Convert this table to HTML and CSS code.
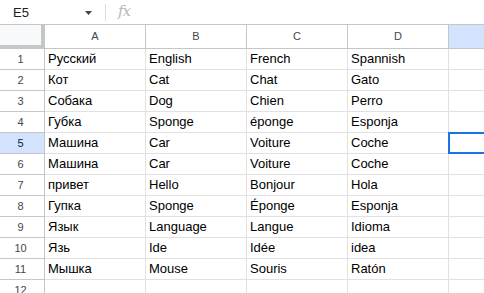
FILE: index.html
```html
<!DOCTYPE html>
<html>
<head>
<meta charset="utf-8">
<link rel="stylesheet" href="styles.css">
</head>
<body>
<div class="toolbar">
  <div class="namebox">E5</div>
  <svg class="caret" width="7" height="4" viewBox="0 0 7 4"><path d="M0 0H7L3.5 4Z" fill="#444"/></svg>
  <div class="sep"></div>
  <div class="fx">fx</div>
</div>
<div class="grid">
  <div class="corner"></div>
  <div class="ch">A</div><div class="ch">B</div><div class="ch">C</div><div class="ch">D</div><div class="ch act"></div>

  <div class="rh">1</div><div class="c">Русский</div><div class="c">English</div><div class="c">French</div><div class="c">Spannish</div><div class="c"></div>
  <div class="rh">2</div><div class="c">Кот</div><div class="c">Cat</div><div class="c">Chat</div><div class="c">Gato</div><div class="c"></div>
  <div class="rh">3</div><div class="c">Собака</div><div class="c">Dog</div><div class="c">Chien</div><div class="c">Perro</div><div class="c"></div>
  <div class="rh">4</div><div class="c">Губка</div><div class="c">Sponge</div><div class="c">éponge</div><div class="c">Esponja</div><div class="c"></div>
  <div class="rh act">5</div><div class="c">Машина</div><div class="c">Car</div><div class="c">Voiture</div><div class="c">Coche</div><div class="c sel"></div>
  <div class="rh">6</div><div class="c">Машина</div><div class="c">Car</div><div class="c">Voiture</div><div class="c">Coche</div><div class="c"></div>
  <div class="rh">7</div><div class="c">привет</div><div class="c">Hello</div><div class="c">Bonjour</div><div class="c">Hola</div><div class="c"></div>
  <div class="rh">8</div><div class="c">Гупка</div><div class="c">Sponge</div><div class="c">Éponge</div><div class="c">Esponja</div><div class="c"></div>
  <div class="rh">9</div><div class="c">Язык</div><div class="c">Language</div><div class="c">Langue</div><div class="c">Idioma</div><div class="c"></div>
  <div class="rh">10</div><div class="c">Язь</div><div class="c">Ide</div><div class="c">Idée</div><div class="c">idea</div><div class="c"></div>
  <div class="rh">11</div><div class="c">Мышка</div><div class="c">Mouse</div><div class="c">Souris</div><div class="c">Ratón</div><div class="c"></div>
  <div class="rh">12</div><div class="c"></div><div class="c"></div><div class="c"></div><div class="c"></div><div class="c"></div>
</div>
</body>
</html>
```
FILE: styles.css
```css
html, body {
  margin: 0;
  padding: 0;
  background: #fff;
  overflow: hidden;
  width: 484px;
  height: 293px;
}
body {
  font-family: "Liberation Sans", Arial, sans-serif;
}
.toolbar {
  height: 24px;
  border-bottom: 1px solid #c4c7c5;
  display: flex;
  align-items: center;
  box-sizing: content-box;
}
.namebox {
  width: 71px;
  padding-left: 13px;
  font-size: 13px;
  color: #202124;
}
.caret {
  margin-left: 1px;
  margin-top: 1px;
}
.sep {
  width: 1px;
  height: 17px;
  background: #dadce0;
  margin-left: 13px;
}
.fx {
  margin-left: 12px;
  font-family: "DejaVu Serif", "Liberation Serif", serif;
  font-style: italic;
  font-size: 15px;
  color: #b7b7b7;
  letter-spacing: -1px;
  margin-top: -2px;
}
.grid {
  display: grid;
  grid-template-columns: 45px repeat(4, 101px) 35px;
  grid-template-rows: 24px repeat(12, 21px);
}
.grid > div {
  box-sizing: border-box;
}
.corner {
  background: #f8f9fa;
  border-right: 4px solid #c4c7c5;
  border-bottom: 4px solid #c4c7c5;
}
.ch {
  border-right: 1px solid #c4c7c5;
  border-bottom: 1px solid #c4c7c5;
  font-size: 11px;
  color: #444746;
  text-align: center;
  line-height: 23px;
}
.rh {
  border-right: 1px solid #c4c7c5;
  border-bottom: 1px solid #c4c7c5;
  font-size: 11px;
  color: #444746;
  text-align: center;
  line-height: 20px;
  padding-right: 3px;
}
.act {
  background: #d3e3fd;
  color: #0b57d0;
}
.rh.act {
  color: #041e49;
}
.c {
  border-right: 1px solid #e1e1e1;
  border-bottom: 1px solid #e1e1e1;
  font-size: 13px;
  line-height: 20px;
  padding-left: 3px;
  color: #000;
  white-space: nowrap;
  overflow: hidden;
}
.grid > div:nth-child(6n) {
  border-right: 0;
}
.sel {
  position: relative;
  overflow: visible;
}
.sel::after {
  content: "";
  position: absolute;
  left: -1px;
  top: -1px;
  right: -2px;
  bottom: -1px;
  border: 2px solid #1a73e8;
}
```
